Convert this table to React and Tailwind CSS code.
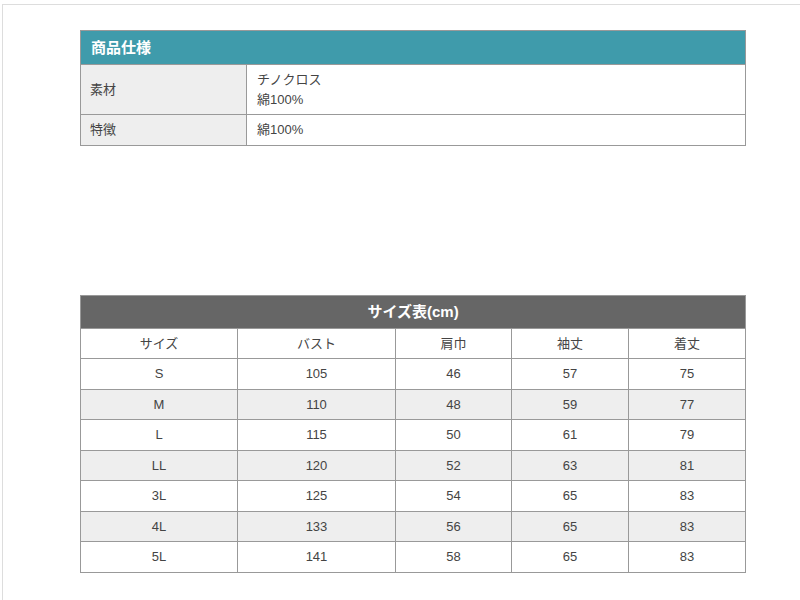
const specs = [
  { label: "素材", value: ["チノクロス", "綿100%"] },
  { label: "特徴", value: ["綿100%"] },
];

const headers = ["サイズ", "バスト", "肩巾", "袖丈", "着丈"];

const sizes = [
  ["S", "105", "46", "57", "75"],
  ["M", "110", "48", "59", "77"],
  ["L", "115", "50", "61", "79"],
  ["LL", "120", "52", "63", "81"],
  ["3L", "125", "54", "65", "83"],
  ["4L", "133", "56", "65", "83"],
  ["5L", "141", "58", "65", "83"],
];

const App = () => {
  return (
    <div
      className="min-h-[600px] bg-white text-[13px] leading-[19.5px] text-[#444]"
      style={{ fontFamily: '"Liberation Sans", Arial, "Noto Sans CJK JP", sans-serif' }}
    >
      <div className="ml-[2px] mt-[4px] min-h-[596px] border-t border-l border-[#ddd] pl-[77px] pt-[25px]">
        {/* spec table */}
        <table className="w-[666px] border-collapse border border-[#999]">
          <thead>
            <tr>
              <th
                colSpan={2}
                className="h-[34px] border border-[#999] bg-[#3f9bab] px-[10px] text-left text-[15px] font-bold text-white"
              >
                商品仕様
              </th>
            </tr>
          </thead>
          <tbody>
            {specs.map((row) => (
              <tr key={row.label}>
                <td className="w-[166px] border border-[#999] bg-[#eee] px-[9px] py-[5px] align-middle">
                  {row.label}
                </td>
                <td className="border border-[#999] px-[10px] py-[5px]">
                  {row.value.map((v) => (
                    <div key={v}>{v}</div>
                  ))}
                </td>
              </tr>
            ))}
          </tbody>
        </table>

        {/* size table */}
        <table className="mt-[149px] w-[666px] table-fixed border-collapse border border-[#999] text-center">
          <colgroup>
            <col className="w-[157px]" />
            <col className="w-[158px]" />
            <col className="w-[116px]" />
            <col className="w-[117px]" />
            <col className="w-[117px]" />
          </colgroup>
          <thead>
            <tr>
              <th
                colSpan={5}
                className="h-[33px] border border-[#999] bg-[#666] text-[15px] font-bold text-white"
              >
                サイズ表(cm)
              </th>
            </tr>
          </thead>
          <tbody>
            <tr>
              {headers.map((h) => (
                <td key={h} className="border border-[#999] py-[5px]">
                  {h}
                </td>
              ))}
            </tr>
            {sizes.map((row, r) => (
              <tr key={row[0]} className={r % 2 === 1 ? "bg-[#eee]" : "bg-white"}>
                {row.map((cell, i) => (
                  <td key={i} className="border border-[#999] py-[5px]">
                    {cell}
                  </td>
                ))}
              </tr>
            ))}
          </tbody>
        </table>
      </div>
    </div>
  );
};

export default App;
